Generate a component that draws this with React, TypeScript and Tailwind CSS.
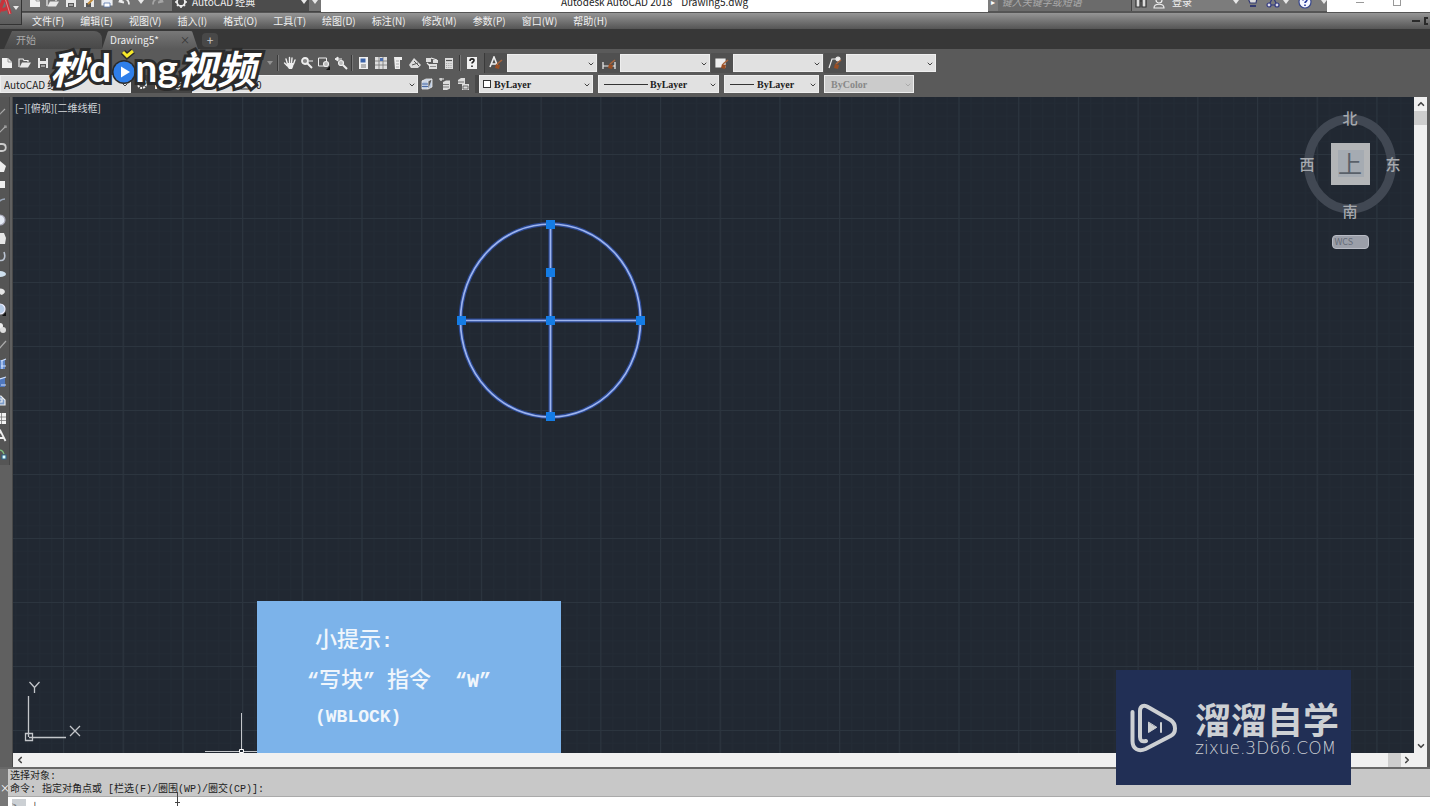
import { ReactNode } from "react";
import { ChevronDown, ChevronLeft, ChevronRight, ChevronUp } from "lucide-react";

const menus = [
  "文件(F)",
  "编辑(E)",
  "视图(V)",
  "插入(I)",
  "格式(O)",
  "工具(T)",
  "绘图(D)",
  "标注(N)",
  "修改(M)",
  "参数(P)",
  "窗口(W)",
  "帮助(H)",
];

function Icon({ children, className = "" }: { children: ReactNode; className?: string }) {
  return (
    <svg viewBox="0 0 14 14" className={`w-3.5 h-3.5 shrink-0 ${className}`} fill="none" stroke="#eeeeee" strokeWidth="1.2">
      {children}
    </svg>
  );
}

function ToolButton({ label, children, className = "w-[18px]" }: { label: string; children: ReactNode; className?: string }) {
  return (
    <button aria-label={label} className={`h-5 shrink-0 flex items-center justify-center ${className}`}>
      {children}
    </button>
  );
}

function Caret({ className = "" }: { className?: string }) {
  return (
    <svg viewBox="0 0 6 4" className={`w-1.5 h-1 shrink-0 ${className}`} fill="#e8e8e8">
      <path d="M0 0h6L3 4z" />
    </svg>
  );
}

// drop-down used in both toolbars, lead is drawn on top of its left part
function Combo({
  label,
  value,
  width,
  pad = "pl-2",
  lead,
  disabled = false,
  tone = "bg-[#e1e1e1] text-[#222]",
}: {
  label: string;
  value: string;
  width: string;
  pad?: string;
  lead?: ReactNode;
  disabled?: boolean;
  tone?: string;
}) {
  return (
    <div className={`relative h-[18px] shrink-0 ${width}`}>
      <select
        aria-label={label}
        disabled={disabled}
        className={`appearance-none block w-full h-full border border-[#eee] ${pad} ${tone}`}
      >
        <option>{value}</option>
      </select>
      {lead && <span className="absolute inset-y-0 left-1.5 flex items-center pointer-events-none">{lead}</span>}
      <ChevronDown
        className={`absolute right-0.5 top-1.5 w-2 h-2 pointer-events-none ${disabled ? "text-[#aaa]" : "text-[#444]"}`}
        strokeWidth={3}
      />
    </div>
  );
}

function NewIcon() {
  return (
    <Icon>
      <path d="M2 2h6l4 4v6H2z" fill="#f0f0f0" stroke="none" />
      <path d="M8 2v4h4" stroke="#888" strokeWidth="0.8" />
    </Icon>
  );
}

function OpenIcon() {
  return (
    <Icon>
      <path d="M1 11V3h4l1 1.500h4V6" />
      <path d="M1.500 11.500L4 6.500h9l-3 5z" fill="#e6e6e6" stroke="none" />
    </Icon>
  );
}

function SaveIcon() {
  return (
    <Icon>
      <path d="M2 2h10v10H2z" fill="#e8e8e8" stroke="none" />
      <path d="M4 2h6v3H4zM4 8h6v4H4z" fill="#555" stroke="none" />
      <path d="M5 10h4" strokeWidth="1" />
    </Icon>
  );
}

function BrushIcon({ children }: { children: ReactNode }) {
  return (
    <Icon>
      {children}
      <path d="M8 8l5-4" stroke="#a8643c" strokeWidth="1.6" />
      <path d="M7 8l4 1-1 4-4-1z" fill="#9a4d22" stroke="none" />
    </Icon>
  );
}

function TitleBar() {
  return (
    <header className="h-3 shrink-0 overflow-hidden bg-white">
      <div className="h-5 -mt-2 flex items-center text-[10px] leading-5">
        <div className="w-[321px] h-full shrink-0 flex items-center bg-[#747474] pl-[26px] border-b border-[#444]">
          <ToolButton label="新建"><NewIcon /></ToolButton>
          <ToolButton label="打开"><OpenIcon /></ToolButton>
          <ToolButton label="保存"><SaveIcon /></ToolButton>
          <ToolButton label="另存为">
            <Icon>
              <path d="M2 2h10v10H2z" fill="#e8e8e8" stroke="none" />
              <path d="M4 8h5v4H4z" fill="#555" stroke="none" />
              <path d="M6 9l6-6" stroke="#c08a3a" strokeWidth="2" />
            </Icon>
          </ToolButton>
          <ToolButton label="打印">
            <Icon>
              <path d="M4 5V1h6v4M2 5h10v5H2z" fill="#e9edf4" />
              <path d="M4 8h6v4H4z" fill="#fff" stroke="#5573a8" strokeWidth="0.8" />
            </Icon>
          </ToolButton>
          <ToolButton label="放弃">
            <Icon><path d="M3 3L1.500 6.500 6 7.500M2 6.500c3-4 9-3 9 3" strokeWidth="1.800" /></Icon>
          </ToolButton>
          <Caret className="mx-1" />
          <ToolButton label="重做">
            <Icon className="opacity-40"><path d="M11 3l1.500 3.500L8 7.500M12 6.500c-3-4-9-3-9 3" strokeWidth="1.800" /></Icon>
          </ToolButton>
          <div className="flex-1 h-full ml-1.5 flex items-center gap-1 bg-[#4c4c4c] px-0.5 text-[#eee]">
            <Icon className="w-3">
              <circle cx="7" cy="7" r="4" strokeWidth="1.800" />
              <path d="M7 1v2M7 11v2M1 7h2M11 7h2M3 3l1 1M10 10l1 1M11 3l-1 1M4 10l-1 1" strokeWidth="1.600" />
            </Icon>
            <span className="flex-1 whitespace-nowrap">AutoCAD 经典</span>
            <Caret />
          </div>
          <div className="w-3 flex justify-center"><Caret /></div>
        </div>
        <h1 className="flex-1 text-center whitespace-pre text-[#222]">Autodesk AutoCAD 2018    Drawing5.dwg</h1>
        <div className="w-[339px] h-full shrink-0 flex items-center bg-[#7c7c7c] border-b border-[#555]">
          <span className="w-2.5 text-white text-[8px] text-center">▸</span>
          <input
            aria-label="搜索"
            placeholder="键入关键字或短语"
            className="w-[136px] h-full bg-[#6b6b6b] border-r border-[#444] px-1 italic placeholder:text-[#aaa]"
          />
          <ToolButton label="查找">
            <Icon>
              <path d="M2 12V5l1.500-3h1.500L6 5v7zM8 12V5l1-3h1.500L12 5v7zM6 6h2" fill="#ddd" stroke="#333" />
            </Icon>
          </ToolButton>
          <ToolButton label="用户">
            <Icon>
              <circle cx="7" cy="5" r="3" />
              <path d="M2 13c0-5 10-5 10 0z" />
            </Icon>
          </ToolButton>
          <button className="ml-1 w-[62px] text-left text-[#eee]">登录</button>
          <Caret />
          <ToolButton label="商店" className="w-7">
            <Icon>
              <path d="M2 3h9l-1 5H4z" fill="#ddd" stroke="#333a70" />
              <path d="M4 11h6" stroke="#333a70" strokeWidth="2" />
            </Icon>
          </ToolButton>
          <ToolButton label="连接" className="w-3">
            <Icon>
              <path d="M7 2l4 8H3z" stroke="#333a80" />
              <circle cx="3" cy="10" r="2" fill="#dde" stroke="#333a80" />
              <circle cx="11" cy="10" r="2" fill="#dde" stroke="#333a80" />
            </Icon>
          </ToolButton>
          <Caret className="ml-1" />
          <ToolButton label="帮助" className="w-8">
            <Icon>
              <circle cx="7" cy="7" r="6" fill="#f4f6ff" stroke="#39488c" />
              <path d="M5 5.500c0-3 4-2.500 4-.5 0 1.500-2 1.500-2 3M7 9.500v1.500" stroke="#26399c" strokeWidth="1.600" />
            </Icon>
          </ToolButton>
          <Caret />
        </div>
        <div className="w-[103px] shrink-0 flex items-center overflow-hidden">
          <button aria-label="最小化" className="w-[66px] flex justify-center"><span className="w-2 h-px bg-[#999]" /></button>
          <button aria-label="还原" className="shrink-0 w-2 h-2 border border-[#999]" />
        </div>
      </div>
    </header>
  );
}

function MenuBar() {
  return (
    <nav className="h-[17px] shrink-0 flex items-center gap-4 pl-8 pr-0.5 bg-linear-to-b from-[#969696] to-[#555555] border-t border-[#555] text-[10px] leading-4 text-[#f0f0f0] overflow-hidden">
      {menus.map((menu) => (
        <button key={menu} className="shrink-0">{menu}</button>
      ))}
      <div className="ml-auto flex items-center gap-1">
        <button aria-label="最小化文档" className="w-2 h-0.5 bg-[#2a2a2a]" />
        <button aria-label="还原文档" className="w-1 h-2 border-2 border-r-0 border-[#2a2a2a]" />
      </div>
    </nav>
  );
}

function FileTabs() {
  return (
    <div className="h-5 shrink-0 flex items-end bg-[#373737] pl-1 text-[10px] leading-4">
      <button className="w-[98px] h-[18px] pl-3 text-left text-[#aaa] bg-linear-to-b from-[#5c5c5c] to-[#484848] rounded-t-lg [clip-path:polygon(8px_0,100%_0,100%_100%,0_100%)]">
        开始
      </button>
      <button className="w-[96px] h-[18px] px-2 flex items-center justify-between text-[#eee] bg-linear-to-b from-[#787878] to-[#5a5a5a] rounded-t-lg [clip-path:polygon(6px_0,90px_0,100%_100%,0_100%)]">
        Drawing5*
        <span className="text-[#333]">×</span>
      </button>
      <button aria-label="新图形" className="ml-1 mb-0.5 w-4 h-3.5 rounded-sm bg-[#484848] text-[#ccc] text-xs leading-3">+</button>
    </div>
  );
}

function Separator() {
  return <span className="w-0.5 h-4 mx-0.5 shrink-0 bg-[#3a3a3a] border-r border-[#777]" />;
}

function StandardToolbar() {
  return (
    <div className="h-6 shrink-0 flex items-center bg-[#5a5a5a] pt-1 [&>button]:w-[17px]">
      <div className="w-[275px] shrink-0 flex items-center justify-between">
        <div className="flex -ml-0.5">
          <ToolButton label="新建"><NewIcon /></ToolButton>
          <ToolButton label="打开"><OpenIcon /></ToolButton>
          <ToolButton label="保存"><SaveIcon /></ToolButton>
        </div>
        <Caret className="mr-0.5 opacity-40" />
      </div>
      <Separator />
      <ToolButton label="平移">
        <Icon>
          <path d="M4.500 8L3 3M6.500 7V1.500M8.500 7l.5-5M10.500 8L12 4M4 9.500L1.500 7" strokeWidth="1.400" strokeLinecap="round" />
          <path d="M4 7h7l-1 4-1 2H6L3.500 9.500z" fill="#eee" stroke="none" />
        </Icon>
      </ToolButton>
      <ToolButton label="实时缩放">
        <Icon>
          <circle cx="5" cy="5" r="3" fill="#888" strokeWidth="1.800" />
          <path d="M7.500 7.500L12 12" strokeWidth="2" />
          <path d="M9 5h4" strokeWidth="1" />
        </Icon>
      </ToolButton>
      <ToolButton label="窗口缩放">
        <Icon>
          <path d="M1.500 2h8v8h-8z" strokeWidth="1" />
          <circle cx="9" cy="8" r="2.500" fill="#bbb" />
          <path d="M13 10v4H9z" fill="#111" stroke="none" />
        </Icon>
      </ToolButton>
      <ToolButton label="缩放上一个">
        <Icon>
          <path d="M1 3l3-2v4zM4 3h4" strokeWidth="1" fill="#eee" />
          <circle cx="7" cy="7" r="2.500" fill="#bbb" />
          <path d="M9 9l4 4" strokeWidth="2" />
        </Icon>
      </ToolButton>
      <Separator />
      <ToolButton label="特性">
        <Icon>
          <path d="M2 1h9v12H2z" fill="#f0f0f0" stroke="none" />
          <path d="M3.500 2.500h5v4h-5z" fill="#3b63a8" stroke="none" />
          <path d="M4 9h5M4 11h5" stroke="#777" />
        </Icon>
      </ToolButton>
      <ToolButton label="设计中心">
        <Icon>
          <path d="M1 1h12v12H1z" fill="#ddd" stroke="none" />
          <path d="M5 1v12M9 1v12M1 5h12M1 9h12" stroke="#777" strokeWidth="0.8" />
          <path d="M6 2h3v3H6z" fill="#4c6fb0" stroke="none" />
        </Icon>
      </ToolButton>
      <ToolButton label="工具选项板">
        <Icon>
          <path d="M3 1h8v3H9v9H4z" fill="#eee" stroke="none" />
          <path d="M5 5h3M5 8h3M5 11h3" stroke="#999" strokeWidth="0.8" />
        </Icon>
      </ToolButton>
      <ToolButton label="图纸集">
        <Icon>
          <path d="M1 9l5-7 7 7-3 3H3z" fill="#ddd" stroke="none" />
          <path d="M4 9l6-2M6 5l5 5" stroke="#555" strokeWidth="1" />
        </Icon>
      </ToolButton>
      <ToolButton label="标记集">
        <Icon>
          <path d="M1 2h5v4H1zM8 4h5v3H8zM4 8h8v5H4z" fill="#ddd" stroke="none" />
          <path d="M6 2l6 2M2 7l3 3" stroke="#eee" />
          <path d="M5 10.500h6" stroke="#777" strokeWidth="0.8" />
        </Icon>
      </ToolButton>
      <ToolButton label="快速计算器">
        <Icon>
          <path d="M3 2h8v11H3z" fill="#ddd" stroke="none" />
          <path d="M4 4.500h6" stroke="#555" />
          <path d="M4 7.500h6M4 9.500h6M4 11.500h6" stroke="#999" strokeWidth="0.8" strokeDasharray="1.200 1" />
        </Icon>
      </ToolButton>
      <Separator />
      <ToolButton label="帮助">
        <Icon>
          <path d="M2 1h10v12H2z" fill="#f2f2f2" stroke="none" />
          <path d="M5 5c0-3 4-2.500 4-.5 0 1.500-2 1.500-2 3M7 9.500v1.500" stroke="#222" strokeWidth="1.600" />
        </Icon>
      </ToolButton>
      <div className="flex gap-px ml-1 border-l border-[#3a3a3a]">
        <div className="flex items-center">
          <ToolButton label="文字样式" className="w-[22px] bg-[#505050]">
            <BrushIcon><path d="M1 11L5 1l4 10M2.500 8h5" strokeWidth="1.600" /></BrushIcon>
          </ToolButton>
          <Combo label="文字样式" value="" width="w-[90px]" />
        </div>
        <div className="flex items-center">
          <ToolButton label="标注样式" className="w-[22px] bg-[#505050]">
            <BrushIcon><path d="M1 6v7M13 6v7M1 10h12" /></BrushIcon>
          </ToolButton>
          <Combo label="标注样式" value="" width="w-[90px]" />
        </div>
        <div className="flex items-center">
          <ToolButton label="表格样式" className="w-[22px] bg-[#505050]">
            <BrushIcon><path d="M1 3h9v8H1z" fill="#eee" /></BrushIcon>
          </ToolButton>
          <Combo label="表格样式" value="" width="w-[90px]" />
        </div>
        <div className="flex items-center">
          <ToolButton label="多重引线样式" className="w-[22px] bg-[#505050]">
            <BrushIcon>
              <path d="M1 12l3-9h4" />
              <circle cx="10" cy="3" r="2" fill="#eee" />
            </BrushIcon>
          </ToolButton>
          <Combo label="多重引线样式" value="" width="w-[90px]" />
        </div>
      </div>
    </div>
  );
}

function PropertiesToolbar() {
  const serif = "font-['Liberation_Serif',serif] font-bold text-[10px]";
  return (
    <div className="h-6 shrink-0 flex items-start bg-[#5a5a5a] pt-0.5 text-[10px]">
      <Combo label="工作空间" value="AutoCAD 经典" width="w-[131px]" pad="pl-[3px]" />
      <div className="w-[61px] shrink-0 flex h-[18px] items-center bg-[#444] pl-0.5">
        <ToolButton label="工作空间设置">
          <Icon><circle cx="7" cy="7" r="4" strokeDasharray="2 1" strokeWidth="2" /></Icon>
        </ToolButton>
        <ToolButton label="我的工作空间"><SaveIcon /></ToolButton>
        <ToolButton label="图层特性">
          <Icon><path d="M2 4l5-2 5 2-5 2zM2 7l5 2 5-2M2 10l5 2 5-2" /></Icon>
        </ToolButton>
      </div>
      <Combo
        label="图层"
        value="0"
        width="w-[226px]"
        pad="pl-[63px]"
        lead={
          <span className="flex gap-1.5">
            <Icon className="w-2.5"><circle cx="7" cy="6" r="4" stroke="#555" /></Icon>
            <Icon className="w-2.5"><circle cx="7" cy="7" r="3" stroke="#555" /></Icon>
            <Icon className="w-2.5"><path d="M3 6h8v6H3z" stroke="#333" /></Icon>
          </span>
        }
      />
      <div className="w-[61px] shrink-0 flex h-[18px] items-center border-r-4 border-[#484848]">
        <ToolButton label="置为当前">
          <Icon>
            <path d="M2 4l4-2h6l-4 2zM2 4v8h6V4M8 12l4-2V2" fill="#b9c8de" strokeWidth="0.8" />
            <path d="M2 7h6M2 9.500h6" stroke="#4a6aa5" />
          </Icon>
        </ToolButton>
        <ToolButton label="上一个图层">
          <Icon>
            <path d="M1 2h5M3 1v3" />
            <path d="M5 5l3-1.500h4v8L9 13H5z" fill="#ddd" stroke="none" />
            <path d="M5 7.500h6M5 10h6" stroke="#666" strokeWidth="0.8" />
          </Icon>
        </ToolButton>
        <ToolButton label="图层状态">
          <Icon>
            <path d="M2 3l3-2h4v6H2zM6 7h7v6H6z" fill="#ddd" stroke="none" />
            <path d="M2 5h6M7 9h5v3H7z" stroke="#555" strokeWidth="0.8" />
          </Icon>
        </ToolButton>
      </div>
      <div className="flex gap-[5px]">
        <Combo
          label="颜色"
          value="ByLayer"
          width="w-[114px]"
          pad="pl-3.5"
          tone={`bg-[#e1e1e1] text-[#222] ${serif}`}
          lead={<span className="-ml-0.5 w-2 h-2 bg-white border border-[#333]" />}
        />
        <Combo
          label="线型"
          value="ByLayer"
          width="w-[121px]"
          pad="pl-[51px]"
          tone={`bg-[#e1e1e1] text-[#222] ${serif}`}
          lead={<span className="w-11 h-px bg-[#333]" />}
        />
        <Combo
          label="线宽"
          value="ByLayer"
          width="w-[95px]"
          pad="pl-8"
          tone={`bg-[#e1e1e1] text-[#222] ${serif}`}
          lead={<span className="w-6 h-px bg-[#333]" />}
        />
        <Combo
          label="打印样式"
          value="ByColor"
          width="w-[90px]"
          pad="pl-1.5"
          disabled
          tone={`bg-[#cbcbcb] text-[#888] ${serif}`}
        />
      </div>
    </div>
  );
}

const drawTools: { name: string; art: ReactNode }[] = [
  { name: "直线", art: <path d="M4 12l8-8" stroke="#aaa" /> },
  { name: "构造线", art: <path d="M6 10l6-6M11 3h2v2" stroke="#aaa" /> },
  { name: "多段线", art: <path d="M4 3h5c5 0 5 7 0 7H4" stroke="#ccc" strokeWidth="1.800" /> },
  { name: "多边形", art: <path d="M7 2l6 5-2 6H3V5z" fill="#eee" stroke="none" /> },
  { name: "矩形", art: <path d="M2 4h10v7H2z" fill="#eee" stroke="none" /> },
  { name: "圆弧", art: <path d="M5 8c2-3 4-4 7-4" stroke="#9aa6b8" strokeWidth="1.600" /> },
  { name: "圆", art: <circle cx="7" cy="7" r="5" fill="#e4eaf5" stroke="#aab" /> },
  { name: "修订云线", art: <path d="M4 2h7l2 5-1 6H4z" fill="#e6e6e6" stroke="none" /> },
  { name: "样条曲线", art: <path d="M5 11c6 2 8-2 6-8" stroke="#b9c2d0" strokeWidth="1.600" /> },
  { name: "椭圆", art: <ellipse cx="7" cy="7" rx="6" ry="3" fill="#cfe0ee" stroke="none" /> },
  { name: "椭圆弧", art: <path d="M3 4c9-2 12 4 5 6z" fill="#e4e4e4" stroke="none" /> },
  {
    name: "插入块",
    art: (
      <>
        <circle cx="7" cy="6" r="5" fill="#b5cbe6" stroke="#eef" />
        <path d="M13 9v4H9z" fill="#111" stroke="none" />
      </>
    ),
  },
  {
    name: "创建块",
    art: (
      <>
        <circle cx="7" cy="5" r="3" fill="#eee" stroke="none" />
        <circle cx="10" cy="9" r="3" fill="#ddd" stroke="none" />
      </>
    ),
  },
  { name: "点", art: <path d="M5 11l8-9" stroke="#aaa" /> },
  {
    name: "图案填充",
    art: (
      <>
        <path d="M2 3h10v9H2z" fill="#5d86c9" stroke="none" />
        <path d="M8 4l5-2M8 9h5M9 3v9" stroke="#cfe0ff" />
      </>
    ),
  },
  {
    name: "渐变色",
    art: (
      <>
        <path d="M2 3h10v9H2z" fill="#4f77bd" stroke="none" />
        <path d="M7 4l6-2M8 10h5" stroke="#cfe0ff" />
      </>
    ),
  },
  { name: "面域", art: <path d="M3 3h5l4 4v5H3zM6 6h3v3H6z" fill="#7d9cc9" /> },
  {
    name: "表格",
    art: (
      <>
        <path d="M2 2h11v11H2z" fill="#f2f2f2" stroke="none" />
        <path d="M2 6h11M2 9.500h11M8.500 2v11" stroke="#777" strokeWidth="0.8" />
      </>
    ),
  },
  { name: "多行文字", art: <path d="M3 12L7.500 2l5 10M5 9h6" strokeWidth="1.800" /> },
  {
    name: "添加选定对象",
    art: (
      <>
        <path d="M5 4c3-2 5 0 6 3" stroke="#7fbf7f" />
        <path d="M9 8h4v4H9z" fill="#dff" stroke="#368" />
      </>
    ),
  },
];

function DrawToolbar() {
  return (
    <aside className="w-[13px] shrink-0 bg-[#606060] border-r border-[#484848] overflow-hidden">
      <div className="w-2.5 pt-1.5 pb-0.5 border-r border-[#464646] bg-[#555] flex flex-col">
        {drawTools.map((tool) => (
          <button key={tool.name} aria-label={tool.name} className="h-[18px] w-3.5 -ml-[7px] flex items-center">
            <Icon>{tool.art}</Icon>
          </button>
        ))}
      </div>
    </aside>
  );
}

function Compass() {
  return (
    <div className="absolute right-3 top-2.5 w-[104px] flex flex-col items-center">
      <svg viewBox="0 0 104 116" className="w-full" fontFamily="Noto Sans CJK SC, sans-serif" textAnchor="middle">
        <ellipse cx="52" cy="57" rx="41.500" ry="45" fill="none" stroke="#414853" strokeWidth="9" />
        <rect x="33" y="36" width="39" height="42" fill="#b3b5b7" />
        <rect x="40" y="43" width="26" height="27" fill="#a5abb2" />
        <text x="52" y="66" fontSize="24" fill="#596069">上</text>
        <g fontSize="15" fontWeight="500" fill="#a6aaaf">
          <text x="52" y="17">北</text>
          <text x="9" y="63">西</text>
          <text x="95" y="63">东</text>
          <text x="52" y="110">南</text>
        </g>
      </svg>
      <button className="mt-3 w-[37px] h-3.5 rounded-sm border border-[#b8bbc4] bg-[#9b9fa9] text-[#666c78] text-[9px] leading-3 text-left pl-0.5">
        WCS
      </button>
    </div>
  );
}

const grips = [
  [537, 127],
  [537, 175],
  [448, 223],
  [537, 223],
  [627, 223],
  [537, 319],
];

function Canvas() {
  return (
    <main className="relative flex-1 min-w-0 bg-[#212832] overflow-hidden">
      <svg className="absolute inset-0 w-full h-full">
        <defs>
          <pattern id="minor" x="50" y="57" width="11.940" height="12.800" patternUnits="userSpaceOnUse">
            <path d="M.5 0v12.800M0 .5h11.940" stroke="#232b35" fill="none" />
          </pattern>
          <pattern id="major" x="50" y="57" width="59.700" height="64" patternUnits="userSpaceOnUse">
            <path d="M.5 0v64M0 .5h59.700" stroke="#2c353f" fill="none" />
          </pattern>
        </defs>
        <rect width="100%" height="100%" fill="url(#minor)" />
        <rect width="100%" height="100%" fill="url(#major)" />
        <g fill="none" stroke="#2c4a96" strokeWidth="4">
          <ellipse cx="537.500" cy="223.500" rx="90" ry="96.500" />
          <path d="M537.500 127v193M448 223.500h180" />
        </g>
        <g fill="none" stroke="#9db4ee" strokeWidth="1.700">
          <ellipse cx="537.500" cy="223.500" rx="90" ry="96.500" />
          <path d="M537.500 127v193M448 223.500h180" />
        </g>
        {grips.map(([x, y]) => (
          <rect key={`${x}-${y}`} x={x - 4} y={y - 4} width="9" height="9" fill="#147ce5" />
        ))}
      </svg>
      <p className="absolute left-0.5 top-1 text-[10px] leading-3.5 text-[#d5d8dc]">[−][俯视][二维线框]</p>
      <Compass />
      <svg className="absolute left-2 bottom-0 w-16 h-[72px]" viewBox="0 0 64 72" fill="none" stroke="#c3c6ca" strokeWidth="1.300">
        <path d="M7.500 15v41M8 56.500h37M4.500 52.500h7v7h-7z" />
        <path d="M8.500 1l5 5.500 5-5.500M13.500 6.500V12M49 45l10 10M59 45L49 55" />
      </svg>
      <svg className="absolute left-48 bottom-0 w-[52px] h-10" viewBox="0 0 52 40" fill="none" stroke="#c3c6ca">
        <path d="M36.500 0v36M0 38.500h34M39 38.500h13" />
        <path d="M34.500 36.500h4v3h-4z" stroke="#fff" />
      </svg>
      <section className="absolute left-[244px] bottom-0 w-[304px] h-[152px] bg-[#7cb3ea] pt-4 pl-[50px] text-[22px] leading-10 font-medium text-[#f0f6fc]">
        <p className="h-10 pl-2">
          小提示<Latin>:</Latin>
        </p>
        <p className="h-10 whitespace-pre">
          <Latin>“</Latin>写块<Latin>” </Latin>指令<Latin>{"  “W”"}</Latin>
        </p>
        <p className="h-10 pl-2 font-['Liberation_Mono',monospace] font-bold text-lg leading-10">(WBLOCK)</p>
      </section>
    </main>
  );
}

function Latin({ children }: { children: ReactNode }) {
  return <span className="font-['Liberation_Mono',monospace] font-bold text-xl leading-none">{children}</span>;
}

function CommandLine() {
  return (
    <footer className="relative shrink-0 flex bg-[#c8c8c8] border-t-2 border-[#686868]">
      <div className="w-2 shrink-0 flex items-center bg-[#777] text-white text-[10px] leading-3 overflow-hidden">
        <span>×</span>
      </div>
      <div className="flex-1">
        <div className="h-7 pt-px pl-0.5 border-b border-[#aaa] font-['Liberation_Mono','Noto_Sans_CJK_SC',monospace] text-[10px] leading-[13px] text-[#222]">
          <p>选择对象:</p>
          <p>命令: 指定对角点或 [栏选(F)/圈围(WP)/圈交(CP)]:</p>
        </div>
        <div className="h-[9px] flex items-start gap-1 bg-white pl-1 overflow-hidden">
          <span className="mt-0.5 w-3.5 h-3 shrink-0 bg-[#ccd0d4] text-[8px] leading-3 text-[#555]">&gt;_</span>
          <input aria-label="命令" defaultValue="-|" className="flex-1 h-4 text-[10px] text-[#222] outline-none" />
        </div>
      </div>
      <svg className="absolute left-[173px] bottom-0 w-2 h-3.5" viewBox="0 0 8 14" fill="none" stroke="#444">
        <path d="M4.500 0v14M2 10.500h5" />
      </svg>
    </footer>
  );
}

function MiaodongLogo() {
  return (
    <div className="absolute left-[50px] top-[43px] h-12 flex items-center leading-none font-bold text-white text-[39px] pointer-events-none [-webkit-text-stroke:6px_#2b2b2b] [paint-order:stroke_fill]">
      <span className="italic">秒</span>
      <span className="relative font-['Lato',sans-serif]">d</span>
      <svg viewBox="0 0 24 48" className="w-6 h-12 shrink-0" strokeWidth="0">
        <circle cx="13" cy="29" r="12" fill="#2b2b2b" />
        <circle cx="13" cy="29" r="10.500" fill="#2f7fea" />
        <path d="M10 23.500l9 5.500-9 5.500z" fill="#fff" />
        <path d="M12 9l4 4 6-5" fill="none" stroke="#2b2b2b" strokeWidth="6" />
        <path d="M12 9l4 4 6-5" fill="none" stroke="#f7e92b" strokeWidth="3" />
      </svg>
      <span className="font-['Lato',sans-serif]">ng</span>
      <span className="italic">视频</span>
    </div>
  );
}

function ZixueLogo() {
  return (
    <div className="absolute right-[79px] bottom-[21px] w-[235px] h-[115px] flex items-center gap-[18px] pl-3.5 bg-[#212f55] text-[#cdd0d3]">
      <svg viewBox="0 0 47 50" className="w-[47px] h-[50px] shrink-0" fill="none" stroke="currentColor" strokeWidth="4" strokeLinecap="round" strokeLinejoin="round">
        <path d="M2.500 9v29c0 8 6 11 13 8l25-13c6-3 6-12 0-16L18 4c-4-2.500-8-1-8 4v26c0 4 2 5 6 4" />
        <path d="M18.500 19.500v10l8-5z" fill="currentColor" strokeWidth="1" />
        <path d="M31 20v9" strokeWidth="2" />
      </svg>
      <div className="whitespace-nowrap">
        <p className="text-4xl leading-10 font-bold">溜溜自学</p>
        <p className="text-[17px] leading-5 font-['DejaVu_Sans',sans-serif] font-extralight">zixue.3D66.COM</p>
      </div>
    </div>
  );
}

export default function App() {
  return (
    <div className="relative h-screen flex flex-col overflow-hidden bg-[#5a5a5a] font-['Noto_Sans_CJK_SC',sans-serif]">
      <TitleBar />
      <MenuBar />
      <FileTabs />
      <StandardToolbar />
      <PropertiesToolbar />

      <div className="flex-1 min-h-0 flex pr-[3px]">
        <DrawToolbar />
        <div className="flex-1 min-w-0 flex flex-col">
          <Canvas />
          <div className="h-3.5 shrink-0 flex items-center gap-px bg-[#f0f0f0] px-0.5 text-[#444]">
            <ChevronLeft className="w-2.5 h-2.5" strokeWidth={4} />
            <span className="ml-auto w-[13px] h-full bg-[#cdcdcd]" />
            <ChevronRight className="w-2.5 h-2.5" strokeWidth={4} />
          </div>
        </div>
        <div className="w-[13px] shrink-0 flex flex-col items-center bg-[#f0f0f0] pb-3.5 text-[#444]">
          <ChevronUp className="w-2.5 h-3.5 shrink-0" strokeWidth={4} />
          <span className="w-full h-3.5 bg-[#cdcdcd]" />
          <ChevronDown className="mt-auto w-2.5 h-3.5 shrink-0" strokeWidth={4} />
        </div>
      </div>

      <CommandLine />

      <button
        aria-label="应用程序菜单"
        className="absolute left-0 top-0 w-[22px] h-[25px] flex items-start justify-between pr-0.5 bg-linear-to-b from-[#777] to-[#5c5c5c] border-r border-b border-[#333]"
      >
        <svg viewBox="0 0 14 18" className="w-3.5 h-[18px] -ml-0.5" fill="none">
          <path d="M0 14L7-4l5 18M1 9c4 2 7 0 9-2" stroke="#c8323a" strokeWidth="3.500" />
          <path d="M7-2l5 16" stroke="#e58a8e" strokeWidth="1" />
        </svg>
        <Caret className="mt-1.5" />
      </button>
      <MiaodongLogo />
      <ZixueLogo />
    </div>
  );
}
